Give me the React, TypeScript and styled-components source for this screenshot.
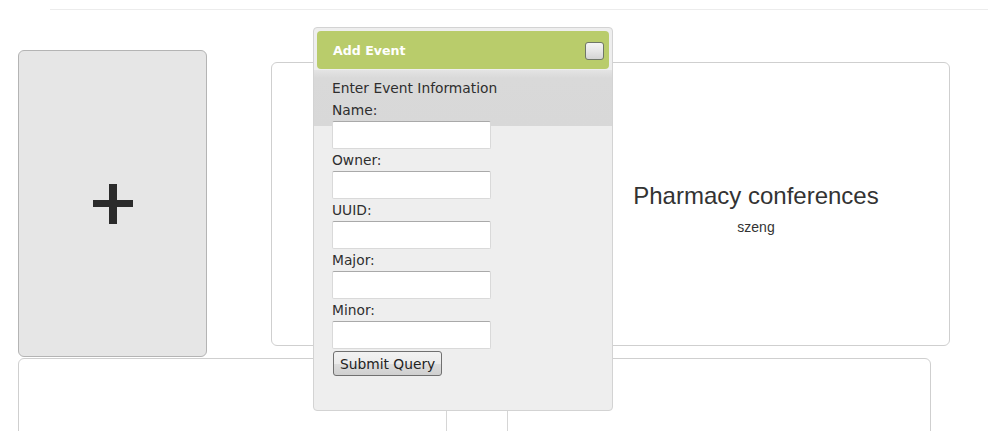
import React from "react";
import styled, { createGlobalStyle } from "styled-components";

const Global = createGlobalStyle`
  html, body { margin: 0; padding: 0; background: #fff; }
  body { font-family: "Liberation Sans", Arial, sans-serif; color: #333; overflow: hidden; }
  * { box-sizing: border-box; }
`;

const Page = styled.div`
  position: relative;
  width: 988px;
  height: 431px;
  overflow: hidden;
  padding-top: 9px;
`;

const TopRule = styled.div`
  height: 1px;
  margin-left: 50px;
  background: #ececec;
`;

const CardRow = styled.div`
  display: flex;
  align-items: flex-start;
  gap: 64px;
  margin-top: 40px;
  padding-left: 18px;
`;

const AddCard = styled.div`
  width: 189px;
  height: 307px;
  background: #e6e6e6;
  border: 1px solid #b4b4b4;
  border-radius: 6px;
  display: flex;
  align-items: center;
  justify-content: center;
`;

const PlusIcon = styled.svg`
  display: block;
  margin-left: 1px;
`;

const EventCard = styled.div`
  margin-top: 12px;
  width: 679px;
  height: 284px;
  border: 1px solid #cfcfcf;
  border-radius: 6px;
  display: grid;
  grid-template-columns: 291px 1fr;
`;

const EventThumb = styled.div``;

const EventInfo = styled.div`
  display: flex;
  flex-direction: column;
  align-items: center;
  justify-content: center;
  padding-top: 10px;
`;

const EventTitle = styled.div`
  font-size: 24px;
  line-height: 28px;
  color: #333;
`;

const EventOwner = styled.div`
  font-size: 14px;
  line-height: 20px;
  margin-top: 7px;
  color: #333;
`;

const LowerCard = styled.div`
  margin: 1px 0 0 18px;
  width: 913px;
  height: 200px;
  border: 1px solid #cfcfcf;
  border-radius: 6px;
  display: grid;
  grid-template-columns: 428px 61px 1fr;
  padding-top: 20px;
`;

const LowerCell = styled.div<{ $divider?: boolean }>`
  border-right: ${(p) => (p.$divider ? "1px solid #d6d6d6" : "none")};
`;

const Dialog = styled.div`
  position: absolute;
  left: 313px;
  top: 27px;
  width: 300px;
  height: 384px;
  background: #eeeeee;
  border: 1px solid #d3d3d3;
  border-radius: 4px;
  padding: 3px;
  font-family: "DejaVu Sans", Verdana, sans-serif;
  display: flex;
  flex-direction: column;
`;

const TitleBar = styled.div`
  height: 38px;
  background: #b9cc6b;
  border-radius: 4px;
  display: flex;
  align-items: center;
  justify-content: space-between;
  padding: 0 5px 0 16px;
`;

const TitleText = styled.span`
  color: #fff;
  font-weight: bold;
  font-size: 12.6px;
`;

const CloseButton = styled.button`
  width: 19px;
  height: 18px;
  padding: 0;
  border: 1px solid #6f7668;
  border-radius: 3px;
  background: linear-gradient(#f4f4f4 0%, #e6e6e6 50%, #d4d4d4 100%);
  margin-top: 1px;
`;

const Content = styled.div`
  flex: 1;
  margin: 1px -3px 0;
  padding: 7px 0 0 18px;
  background: linear-gradient(#e4e4e4 0px, #d9d9d9 8px, #d8d8d8 56px, #eeeeee 56px);
  color: #2e2e2e;
  font-size: 13.8px;
`;

const Heading = styled.div`
  line-height: 22px;
  font-size: 13.8px;
`;

const Field = styled.div`
  display: flex;
  flex-direction: column;
  align-items: flex-start;
`;

const Label = styled.label`
  line-height: 22px;
  font-size: 13.8px;
`;

const TextInput = styled.input`
  width: 159px;
  height: 28px;
  border: 1px solid #d9d9d9;
  border-top-color: #a9a9a9;
  border-radius: 2px;
  background: #fff;
  margin: 0;
`;

const SubmitButton = styled.button`
  margin: 2px 0 0 1px;
  height: 25px;
  padding: 0 6px;
  border: 1px solid #707070;
  border-radius: 3px;
  background: linear-gradient(#f2f2f2 0%, #ebebeb 50%, #dddddd 51%, #cfcfcf 100%);
  font-family: "DejaVu Sans", Verdana, sans-serif;
  font-size: 13.8px;
  color: #222;
`;

const fields = ["Name:", "Owner:", "UUID:", "Major:", "Minor:"];

export default function App() {
  return (
    <Page>
      <Global />
      <TopRule />
      <CardRow>
        <AddCard>
          <PlusIcon width="40" height="40" viewBox="0 0 40 40">
            <rect x="0" y="16" width="40" height="7" fill="#2b2b2b" />
            <rect x="16" y="0" width="8" height="40" fill="#2b2b2b" />
          </PlusIcon>
        </AddCard>
        <EventCard>
          <EventThumb />
          <EventInfo>
            <EventTitle>Pharmacy conferences</EventTitle>
            <EventOwner>szeng</EventOwner>
          </EventInfo>
        </EventCard>
      </CardRow>
      <LowerCard>
        <LowerCell $divider />
        <LowerCell $divider />
        <LowerCell />
      </LowerCard>
      <Dialog>
        <TitleBar>
          <TitleText>Add Event</TitleText>
          <CloseButton aria-label="close" />
        </TitleBar>
        <Content>
          <Heading>Enter Event Information</Heading>
          {fields.map((f) => (
            <Field key={f}>
              <Label>{f}</Label>
              <TextInput type="text" />
            </Field>
          ))}
          <SubmitButton>Submit Query</SubmitButton>
        </Content>
      </Dialog>
    </Page>
  );
}
